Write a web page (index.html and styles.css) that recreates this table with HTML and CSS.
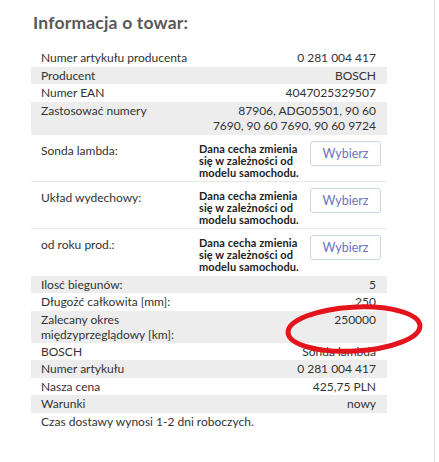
FILE: index.html
```html
<!DOCTYPE html>
<html lang="pl">
<head>
<meta charset="utf-8">
<link rel="stylesheet" href="styles.css">
</head>
<body>
<div class="page">
  <h2 class="title">Informacja o towar:</h2>
  <div class="table">
    <div class="row"><span>Numer artykułu producenta</span><span>0 281 004 417</span></div>
    <div class="row alt"><span>Producent</span><span>BOSCH</span></div>
    <div class="row"><span>Numer EAN</span><span>4047025329507</span></div>
    <div class="row alt"><span>Zastosować numery</span><span class="val">87906, ADG05501, 90 60<br>7690, 90 60 7690, 90 60 9724</span></div>
    <div class="feature"><span class="flabel">Sonda lambda:</span><span class="note">Dana cecha zmienia<br>się w zależności od<br>modelu samochodu.</span><button class="btn">Wybierz</button></div>
    <div class="feature"><span class="flabel">Układ wydechowy:</span><span class="note">Dana cecha zmienia<br>się w zależności od<br>modelu samochodu.</span><button class="btn">Wybierz</button></div>
    <div class="feature last"><span class="flabel">od roku prod.:</span><span class="note">Dana cecha zmienia<br>się w zależności od<br>modelu samochodu.</span><button class="btn">Wybierz</button></div>
    <div class="row alt"><span>Ilosć biegunów:</span><span>5</span></div>
    <div class="row"><span>Długożć całkowita [mm]:</span><span>250</span></div>
    <div class="row alt"><span class="val2">Zalecany okres<br>międzyprzeglądowy [km]:</span><span>250000</span></div>
    <div class="row"><span>BOSCH</span><span>Sonda lambda</span></div>
    <div class="row alt"><span>Numer artykułu</span><span>0 281 004 417</span></div>
    <div class="row"><span>Nasza cena</span><span>425,75 PLN</span></div>
    <div class="row alt"><span>Warunki</span><span>nowy</span></div>
    <div class="row"><span>Czas dostawy wynosi 1-2 dni roboczych.</span></div>
    <svg class="mark" width="144" height="56" viewBox="0 0 144 56"><ellipse cx="70" cy="28" rx="66" ry="22" fill="none" stroke="#e3141c" stroke-width="5"/></svg>
  </div>
</div>
</body>
</html>
```
FILE: styles.css
```css
html, body {
  margin: 0;
  padding: 0;
  background: #fff;
}
.page {
  width: 435px;
  height: 462px;
  border-right: 1px solid #e2e2e2;
  padding: 0 0 0 31px;
  box-sizing: border-box;
  font-family: "Lato", "Liberation Sans", sans-serif;
  color: #333;
}
.title {
  margin: 0;
  padding: 11px 0 0 2px;
  height: 38px;
  box-sizing: border-box;
  font-size: 17.5px;
  font-weight: 700;
  color: #595959;
  line-height: 24px;
  letter-spacing: 0.2px;
}
.table {
  position: relative;
  width: 356px;
  margin-top: 11px;
  font-size: 12px;
}
.row {
  display: flex;
  justify-content: space-between;
  padding: 1px 11px 1px 10px;
  line-height: 15.5px;
}
.row .val {
  text-align: right;
  line-height: 15.5px;
}
.row .val2 {
  line-height: 15px;
}
.alt {
  background: #ededed;
}
.feature {
  display: grid;
  grid-template-columns: 158px 111px 71px;
  padding: 6px 6px 2px 10px;
  border-bottom: 1px solid #e8e8e8;
  align-items: start;
}
.feature.last {
  border-bottom: none;
  padding-bottom: 3px;
}
.flabel {
  line-height: 15px;
  padding-top: 2px;
}
.note {
  font-weight: 700;
  font-size: 11px;
  letter-spacing: 0.1px;
  line-height: 12px;
  color: #222;
  padding-top: 2px;
  white-space: nowrap;
}
.btn {
  width: 71px;
  height: 25px;
  border: 1px solid #c9d6e6;
  border-radius: 3px;
  background: #fff;
  color: #6d72c3;
  font-family: "Lato", "Liberation Sans", sans-serif;
  font-size: 12.5px;
  padding: 0;
}
.mark {
  position: absolute;
  left: 253px;
  top: 252px;
  transform: rotate(-3deg);
}
```
